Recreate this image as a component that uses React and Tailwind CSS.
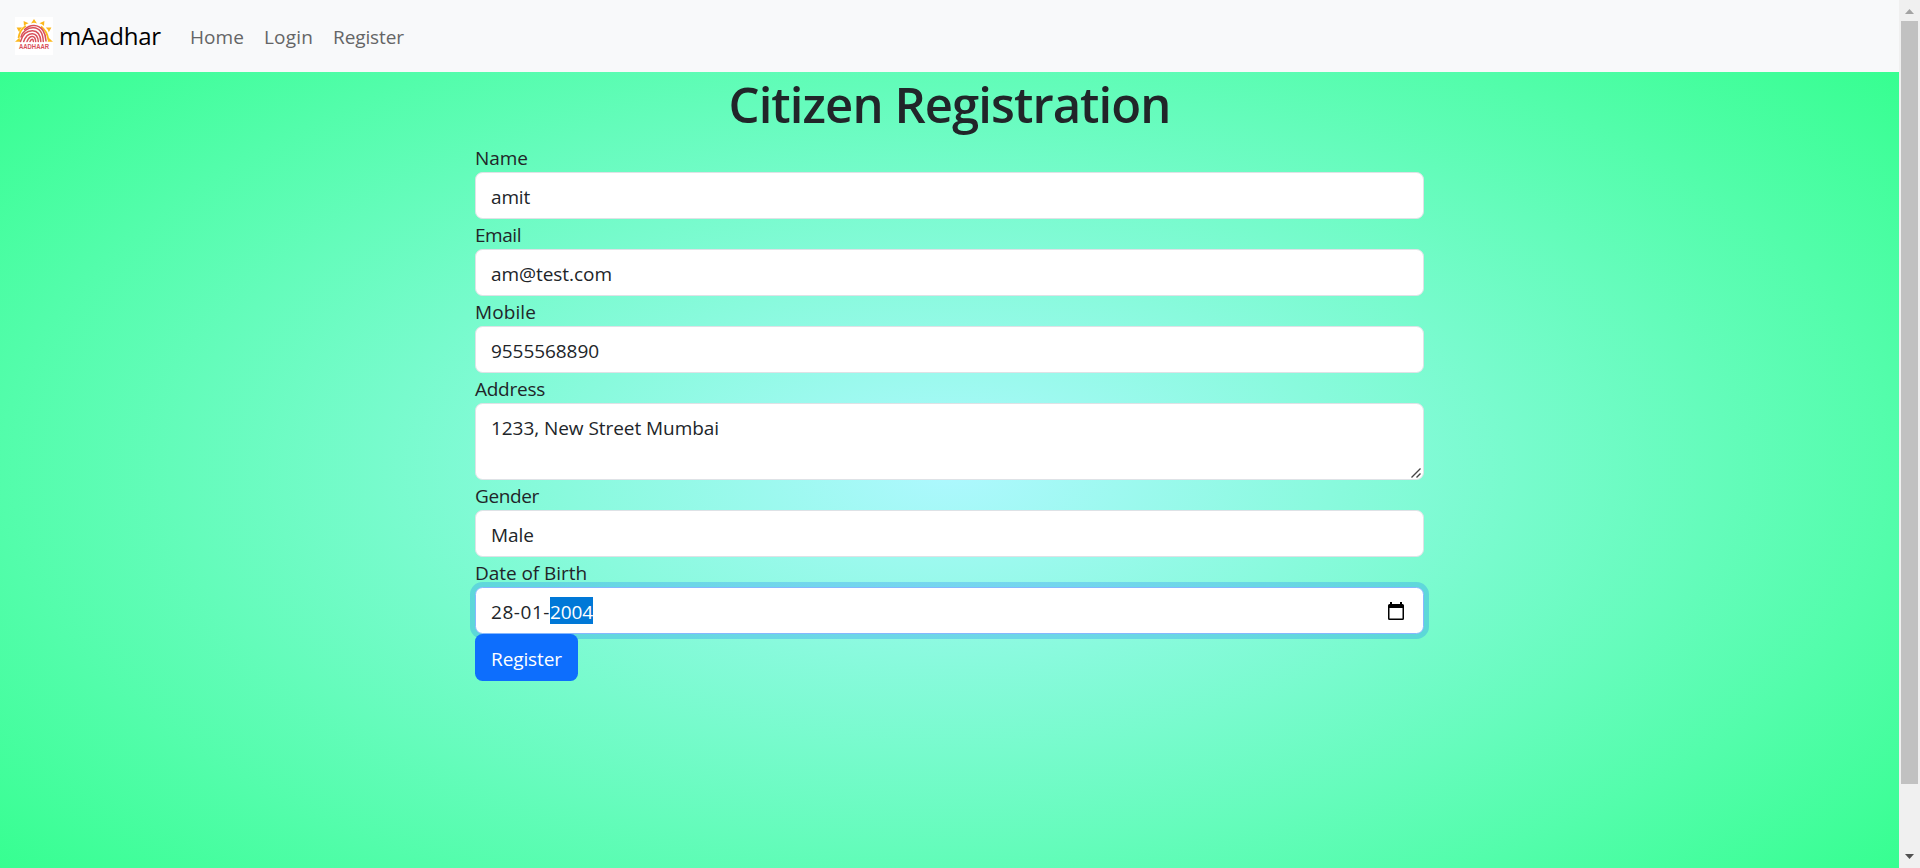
import React from 'react';

const fieldBox =
  'block w-full rounded-[7.5px] border border-[#dee2e6] bg-white px-[15px] text-[#212529]';

function Label({ children, width }) {
  return (
    <label className="block h-[30px] leading-[32px]">
      <FitText width={width}>{children}</FitText>
    </label>
  );
}

function Field({ label, value, width }) {
  return (
    <div>
      <Label width={width[0]}>{label}</Label>
      <div className={`${fieldBox} h-[47px] pt-[9px] leading-[30px]`}>
        <FitText width={width[1]}>{value}</FitText>
      </div>
    </div>
  );
}

function FitText({ children, width }) {
  const ref = React.useRef(null);
  const [spacing, setSpacing] = React.useState(0);
  React.useLayoutEffect(() => {
    const natural = ref.current.getBoundingClientRect().width;
    setSpacing((width - natural) / children.length);
  }, [width, children]);
  return (
    <span ref={ref} className="whitespace-nowrap" style={{ letterSpacing: `${spacing}px` }}>
      {children}
    </span>
  );
}

function Logo() {
  return (
    <svg className="h-[38px] w-[38px] bg-white" viewBox="0 0 38 38" fill="none">
      <g fill="#fbb81c">
        <path d="M16 6.400 19 2l3 4.400Q19 5 16 6.400z" />
        <path d="M9 9 8.600 4l5 2.200Q11 6.800 9 9z" />
        <path d="M29 9 29.400 4l-5 2.200q2.600.6 4.600 2.800z" />
        <path d="M4.200 15.200 1.600 10.600l5.600-.2q-2.200 1.800-3 4.800z" />
        <path d="M33.800 15.200 36.400 10.600l-5.600-.2q2.200 1.800 3 4.800z" />
        <path d="M0 24.800 4.400 20.800 5.400 24.800z" />
        <path d="M38 24.800 33.600 20.800 32.600 24.800z" />
      </g>
      <path d="M3.500 21C4.500 15 7 11 11 9M26 9.500c4 3 6.500 7 7.500 13.500" stroke="#fbb81c" strokeWidth="1.800" />
      <g stroke="#d9505a" strokeWidth="1.500" strokeLinecap="round">
        <path d="M9.500 12.500C15 7 23.500 7 28 13.500c2 3 2.800 6.500 3 10.500" />
        <path d="M6 20c1.500-6 7-9.500 12.500-9.200C25 11.200 28 16.500 28.300 24.500" />
        <path d="M5.500 24.500C7.500 17.500 12 13.700 17.500 13.800c5.500.2 8 5 8.300 10.700" />
        <path d="M8.700 24.500c1.800-5 4.500-8 8.800-7.800 4 .2 5.500 4 5.800 7.800" />
        <path d="M12 24.500c1.300-3 2.800-5.200 5.500-5 2.200.2 3 2.600 3.200 5" />
        <path d="M15 24.500c.6-1.300 1.300-2.300 2.300-2.200.8.100 1 .8 1.100 2.200" />
      </g>
      <text x="4" y="31.600" textLength="30" lengthAdjust="spacingAndGlyphs" fill="#d9505a" className="font-['Liberation_Sans'] text-[6.300px] font-bold">
        AADHAAR
      </text>
    </svg>
  );
}

export default function App() {
  return (
    <div className="flex h-[868px] w-full overflow-hidden font-['Open_Sans','Noto_Sans',sans-serif] text-[19px] font-normal text-[#212529]">
      <div className="h-[940px] min-w-0 flex-1 bg-[radial-gradient(#aef8ff,#2dff88)]">
        <nav className="flex h-[72px] items-center bg-[#f8f9fa] pl-[15px]">
          <Logo />
          <div className="ml-[6px] h-[38px] w-[102px] text-[24px] leading-[38px] text-black">
            <FitText width={102}>mAadhar</FitText>
          </div>
          <div className="flex h-[30px] pl-[29px] leading-[32px] text-[#646566]">
            <a className="w-[74px]"><FitText width={54}>Home</FitText></a>
            <a className="w-[69px]"><FitText width={49}>Login</FitText></a>
            <a><FitText width={71}>Register</FitText></a>
          </div>
        </nav>
        <main>
          <div className="mx-auto w-[949px]">
            <h1 className="mb-[9px] flex h-[61px] justify-center text-[49px] leading-[64px] font-semibold">
              <FitText width={442}>Citizen Registration</FitText>
            </h1>
            <Field label="Name" value="amit" width={[53, 39]} />
            <Field label="Email" value="am@test.com" width={[46, 121]} />
            <Field label="Mobile" value="9555568890" width={[61, 108]} />
            <Label width={70}>Address</Label>
            <div className={`${fieldBox} flex h-[77px] justify-between pt-[9px] pr-[2px] leading-[30px]`}>
              <FitText width={228}>1233, New Street Mumbai</FitText>
              <svg className="mb-[1px] h-[10px] w-[10px] self-end" viewBox="0 0 10 10" stroke="#444" strokeWidth="1.400">
                <path d="M.5 9.500 9.500.5M5.500 9.500l4-4" />
              </svg>
            </div>
            <Field label="Gender" value="Male" width={[64, 43]} />
            <Label width={112}>Date of Birth</Label>
            <div className="flex h-[47px] items-center justify-between rounded-[7.500px] border border-[#86b7fe] bg-white pr-[19px] pl-[15px] leading-[30px] shadow-[0_0_0_5px_rgba(13,110,253,.25)]">
              <span className="flex h-[27px]">
                <FitText width={59}>28-01-</FitText>
                <span className="w-[43px] bg-[#0078d7] text-white"><FitText width={43}>2004</FitText></span>
              </span>
              <svg className="h-[18px] w-[16px]" viewBox="0 0 16 18">
                <path fill="#000" fillRule="evenodd" d="M2 0h2v2h8V0h2v2h.5A1.500 1.500 0 0 1 16 3.500v13A1.500 1.500 0 0 1 14.500 18h-13A1.500 1.500 0 0 1 0 16.500v-13A1.500 1.500 0 0 1 1.500 2H2zM1.500 6v10.500h13V6z" />
              </svg>
            </div>
            <button className="relative block h-[47px] w-[103px] rounded-[7.500px] bg-[#0d6efd] pl-[16px] text-left leading-[50px] text-white">
              <FitText width={71}>Register</FitText>
            </button>
          </div>
        </main>
      </div>
      <div className="flex h-full w-[21px] flex-col items-center justify-between bg-[#f0f0f0]">
        <svg className="mt-[9px] h-[5px] w-[9px] shrink-0" viewBox="0 0 9 5"><path fill="#a3a3a3" d="M0 5 4.500 0 9 5z" /></svg>
        <div className="mt-[7px] mb-auto h-[763px] w-[17px] bg-[#c1c1c1]" />
        <svg className="mb-[9px] h-[5px] w-[9px] shrink-0" viewBox="0 0 9 5"><path fill="#505050" d="M0 0h9L4.500 5z" /></svg>
      </div>
    </div>
  );
}
